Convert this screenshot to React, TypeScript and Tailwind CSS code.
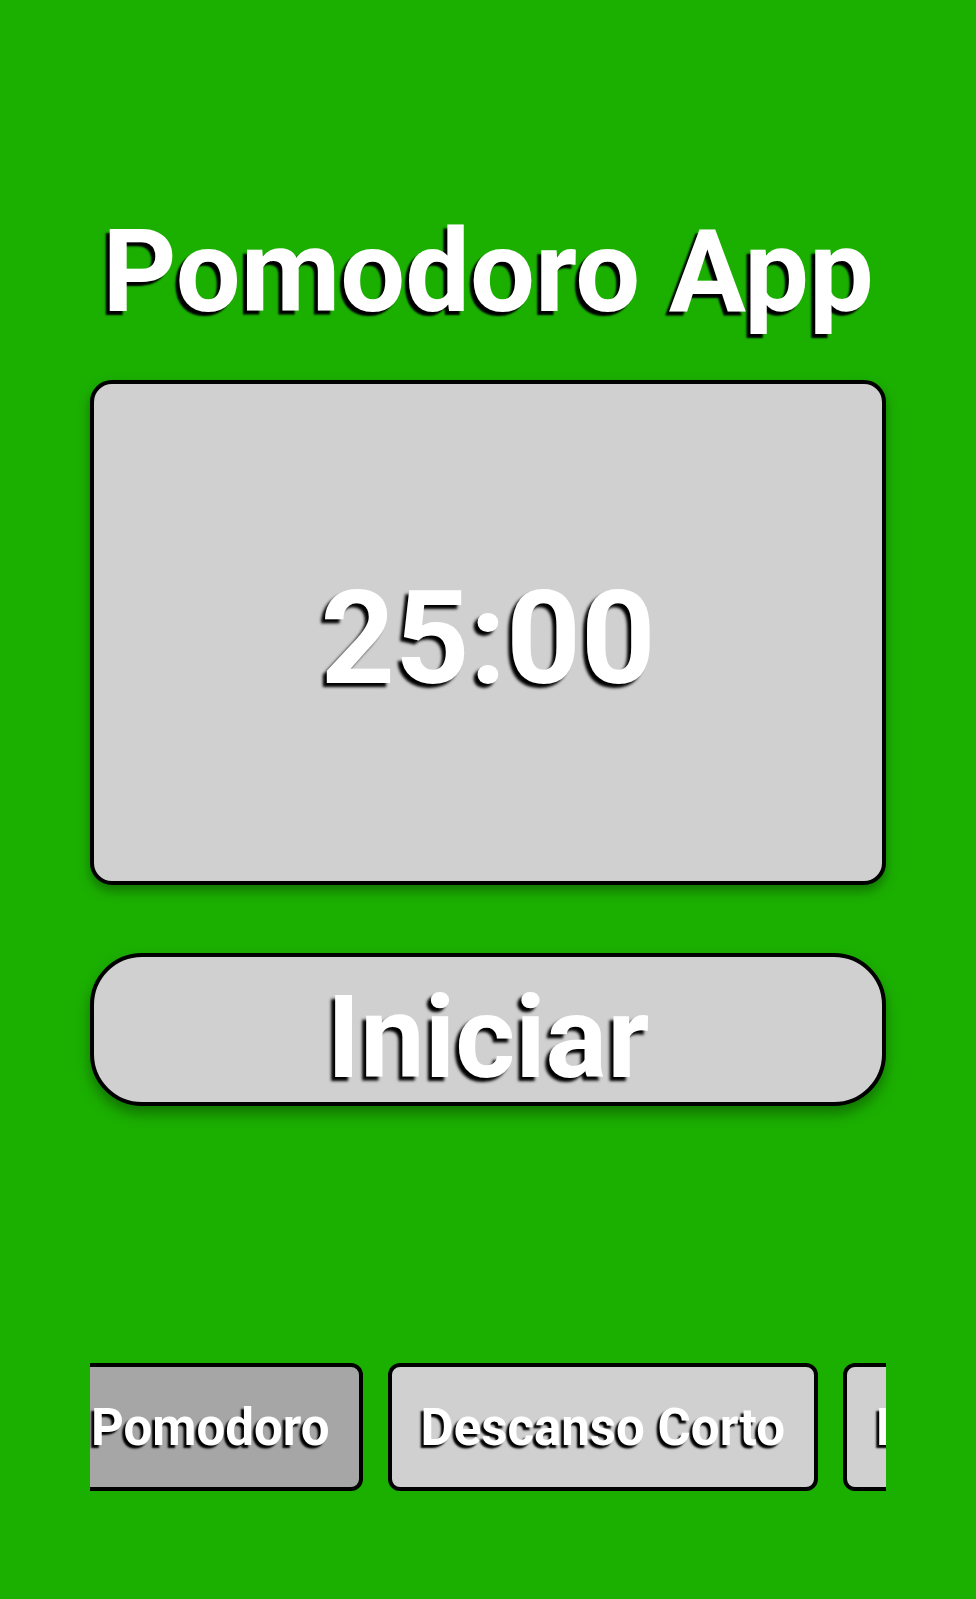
const tabs = [
  { label: "Pomodoro", active: true },
  { label: "Descanso Corto", active: false },
  { label: "Descanso Largo", active: false },
];

export default function App() {
  return (
    <div className="min-h-[1599px] bg-[#1bb000] px-[90px] pt-[214px] flex flex-col font-['Roboto',sans-serif]">
      <h1 className="text-center text-white font-bold text-[115px] leading-none whitespace-nowrap [text-shadow:-4px_4px_2px_#000]">
        Pomodoro App
      </h1>

      <div className="mt-[51px] h-[505px] rounded-[22px] border-4 border-black bg-[#d0d0d0] shadow-[0_6px_12px_rgba(0,0,0,0.35)] flex items-center justify-center pt-[12px]">
        <span className="text-white font-bold text-[130px] leading-none [text-shadow:-4px_4px_3px_#000]">
          25:00
        </span>
      </div>

      <button className="mt-[68px] h-[153px] rounded-[52px] border-4 border-black bg-[#d0d0d0] shadow-[0_8px_14px_rgba(0,0,0,0.35)] flex items-center justify-center pt-[16px]">
        <span className="text-white font-bold text-[115px] leading-none [text-shadow:-4px_4px_3px_#000]">
          Iniciar
        </span>
      </button>

      <div className="mt-[257px] overflow-hidden">
        <div className="flex gap-[25px] -ml-[32px]">
          {tabs.map((tab) => (
            <div
              key={tab.label}
              className={
                "shrink-0 h-[128px] px-[29px] rounded-[12px] border-4 border-black flex items-center " +
                (tab.active ? "bg-[#a6a6a6]" : "bg-[#d0d0d0]")
              }
            >
              <span className="text-white font-bold text-[51px] leading-none whitespace-nowrap [text-shadow:-3px_3px_2px_#000]">
                {tab.label}
              </span>
            </div>
          ))}
        </div>
      </div>
    </div>
  );
}
